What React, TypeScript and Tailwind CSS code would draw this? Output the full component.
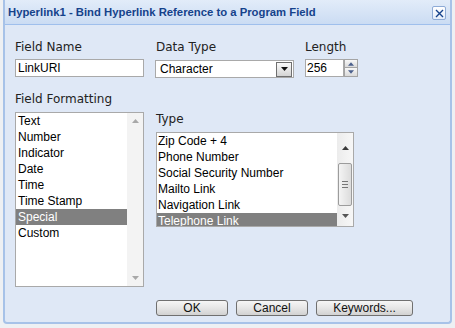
import type { ReactNode } from "react";

const formats = ["Text", "Number", "Indicator", "Date", "Time", "Time Stamp", "Special", "Custom"];
const types = ["Zip Code + 4", "Phone Number", "Social Security Number", "Mailto Link", "Navigation Link", "Telephone Link"];

const Tri = ({ up, color, w = 7 }: { up?: boolean; color: string; w?: number }) => (
  <svg width={w} height={4} viewBox="0 0 7 4" className="block">
    <path d={up ? "M0 4 L3.5 0 L7 4 Z" : "M0 0 L7 0 L3.5 4 Z"} fill={color} />
  </svg>
);

const Label = ({ children, className = "" }: { children: ReactNode; className?: string }) => (
  <div className={`h-[15px] leading-[15px] text-[12px] text-[#222] font-['DejaVu_Sans',sans-serif] ${className}`}>
    {children}
  </div>
);

const Btn = ({ children, w }: { children: ReactNode; w: string }) => (
  <button
    className={`${w} h-[16px] rounded-[3px] border border-[#707070] bg-gradient-to-b from-[#f6f6f6] via-[#e6e6e6] to-[#d2d2d2] text-[12px] leading-[14px] text-[#111] flex items-center justify-center`}
  >
    {children}
  </button>
);

export default function App() {
  return (
    <div className="w-[455px] h-[328px] bg-[#eef0f3] overflow-hidden font-['Liberation_Sans',Arial,sans-serif]">
      <div className="ml-[3px] w-[449px] h-[324px] border-x-2 border-b-2 border-[#a7c2e8] rounded-b-[4px] bg-[#dfe8f6] flex flex-col">
        {/* title bar */}
        <div className="h-[25px] shrink-0 flex items-center justify-between pl-[3px] pr-[4px] bg-gradient-to-b from-[#e2ecf9] to-[#cbdcf3] border-b border-[#9fbfec]">
          <span className="text-[11.3px] font-bold text-[#15428b] pt-[1px]">
            Hyperlink1 - Bind Hyperlink Reference to a Program Field
          </span>
          <div className="w-[14px] h-[14px] mt-[2px] rounded-[2px] border border-[#8eabd6] bg-gradient-to-b from-white to-[#e4edf9] flex items-center justify-center">
            <svg width="9" height="9" viewBox="0 0 9 9">
              <path d="M1 1 L8 8 M8 1 L1 8" stroke="#15428b" strokeWidth="1.4" />
            </svg>
          </div>
        </div>

        <div className="flex-1 pl-[10px] pt-[15px]">
          {/* row 1 */}
          <div className="flex">
            <div className="w-[129px]">
              <Label>Field Name</Label>
              <div className="mt-[4px] h-[18px] border border-[#a9a9a9] bg-white pl-[2px] text-[12px] leading-[16px] text-black">
                LinkURI
              </div>
            </div>
            <div className="w-[139px] ml-[11px]">
              <Label className="pl-[1px]">Data Type</Label>
              <div className="mt-[5px] h-[18px] border border-[#a9a9a9] bg-white flex items-center justify-between">
                <span className="pl-[4px] text-[12px] leading-[16px] text-black">Character</span>
                <div className="w-[16px] h-[15px] mr-[1px] border border-[#6f6f6f] bg-gradient-to-b from-[#fafafa] to-[#d4d4d4] flex items-center justify-center">
                  <Tri color="#111" w={7} />
                </div>
              </div>
            </div>
            <div className="ml-[11px]">
              <Label>Length</Label>
              <div className="mt-[4px] flex h-[18px]">
                <div className="w-[39px] border border-[#a9a9a9] bg-white pl-[1px] text-[12px] leading-[16px] text-black">256</div>
                <div className="w-[14px] flex flex-col">
                  <div className="h-[9px] border border-[#a4a4a4] bg-gradient-to-b from-[#f8f8f8] to-[#dadada] flex items-center justify-center">
                    <Tri up color="#4a5f8c" w={6} />
                  </div>
                  <div className="h-[9px] border border-t-0 border-[#a4a4a4] bg-gradient-to-b from-[#f8f8f8] to-[#dadada] flex items-center justify-center">
                    <Tri color="#4a5f8c" w={6} />
                  </div>
                </div>
              </div>
            </div>
          </div>

          {/* row 2 */}
          <div className="flex mt-[14px]">
            <div className="w-[129px]">
              <Label>Field Formatting</Label>
              <div className="mt-[5px] h-[175px] border border-[#a9a9a9] bg-white flex">
                <div className="flex-1">
                  {formats.map((f) => (
                    <div
                      key={f}
                      className={`h-[16px] leading-[16px] pl-[2px] text-[12px] ${f === "Special" ? "bg-[#808080] text-white" : "text-black"}`}
                    >
                      {f}
                    </div>
                  ))}
                </div>
                <div className="w-[16px] bg-[#f3f3f3] flex flex-col items-center justify-between py-[6px]">
                  <Tri up color="#a8a8a8" />
                  <Tri color="#a8a8a8" />
                </div>
              </div>
            </div>
            <div className="ml-[12px] pt-[20px]">
              <Label>Type</Label>
              <div className="mt-[5px] w-[198px] h-[95px] border border-[#a9a9a9] bg-white flex overflow-hidden">
                <div className="flex-1">
                  {types.map((t) => (
                    <div
                      key={t}
                      className={`h-[16px] leading-[16px] pl-[1px] text-[12px] ${t === "Telephone Link" ? "bg-[#808080] text-white" : "text-black"}`}
                    >
                      {t}
                    </div>
                  ))}
                </div>
                <div className="w-[16px] bg-gradient-to-r from-[#ececec] to-[#f7f7f7] flex flex-col items-center">
                  <div className="h-[30px] flex items-center">
                    <Tri up color="#3a3a3a" />
                  </div>
                  <div className="w-[14px] h-[43px] rounded-[2px] border border-[#9c9c9c] bg-gradient-to-r from-[#f4f4f4] to-[#dcdcdc] flex flex-col items-center justify-center gap-[2px]">
                    <div className="w-[6px] h-px bg-[#777]" />
                    <div className="w-[6px] h-px bg-[#777]" />
                    <div className="w-[6px] h-px bg-[#777]" />
                  </div>
                  <div className="flex-1 flex items-center">
                    <Tri color="#555" />
                  </div>
                </div>
              </div>
            </div>
          </div>

          {/* buttons */}
          <div className="flex gap-[8px] ml-[141px] mt-[13px]">
            <Btn w="w-[72px]">OK</Btn>
            <Btn w="w-[72px]">Cancel</Btn>
            <Btn w="w-[97px]">Keywords...</Btn>
          </div>
        </div>
      </div>
    </div>
  );
}
